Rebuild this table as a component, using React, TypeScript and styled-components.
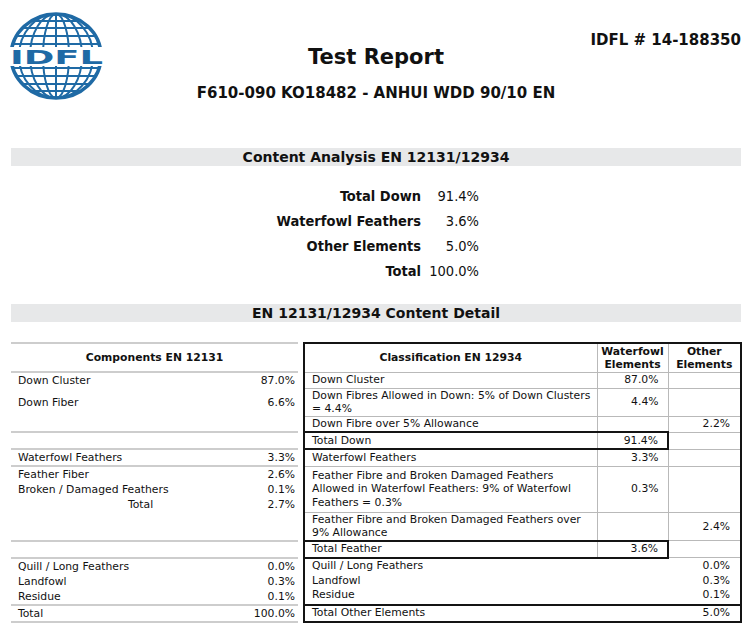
import styled, { createGlobalStyle } from "styled-components";

const GlobalStyle = createGlobalStyle`
  html, body {
    margin: 0;
    padding: 0;
    background: #fff;
  }
  body {
    font-family: "DejaVu Sans", Verdana, sans-serif;
    color: #111;
  }
`;

const BLUE = "#1f6aa5";
const GRID = "#b9b9b9";
const RULE = "#cdcdcd";
const INK = "#141414";

const Page = styled.div`
  width: 750px;
  box-sizing: border-box;
  padding: 0 9px 0 11px;
`;

const Header = styled.header`
  display: grid;
  grid-template-columns: 1fr auto 1fr;
  align-items: start;
`;

const LogoBox = styled.div`
  margin: 10px 0 0 -5px;
  width: 100px;
  height: 92px;
`;

const TitleBlock = styled.div`
  padding-top: 44px;
  text-align: center;
`;

const Title = styled.h1`
  margin: 0;
  font-size: 21px;
  line-height: 26px;
  font-weight: bold;
`;

const Subtitle = styled.h2`
  margin: 13px 0 0;
  font-size: 15px;
  line-height: 20px;
  font-weight: bold;
`;

const ReportNo = styled.div`
  justify-self: end;
  padding-top: 30px;
  font-size: 15px;
  line-height: 20px;
  font-weight: bold;
`;

const SectionBar = styled.div<{ $gap: number }>`
  margin-top: ${({ $gap }) => $gap}px;
  height: 18px;
  line-height: 18px;
  background: #e7e8e9;
  text-align: center;
  font-size: 14px;
  font-weight: bold;
`;

const Summary = styled.div`
  margin-top: 18px;
  display: grid;
  grid-template-columns: 410px 58px;
  font-family: "DejaVu Sans Condensed", "DejaVu Sans", sans-serif;
  font-stretch: condensed;
  font-size: 14.5px;
  line-height: 25px;
`;

const SumLabel = styled.div`
  text-align: right;
  font-weight: bold;
`;

const SumValue = styled.div`
  text-align: right;
`;

const Grid = styled.table`
  margin-top: 20px;
  width: 730px;
  table-layout: fixed;
  border-collapse: collapse;
  font-size: 10.8px;
`;

const Row = styled.tr<{ $h: number }>`
  height: ${({ $h }) => $h}px;
`;

const LCell = styled.td<{ $rule?: boolean; $num?: boolean; $top?: boolean }>`
  padding: 0 3px 0 7px;
  line-height: 15px;
  white-space: nowrap;
  text-align: ${({ $num }) => ($num ? "right" : "left")};
  vertical-align: ${({ $top }) => ($top ? "top" : "middle")};
  border-bottom: ${({ $rule }) => ($rule ? `2px solid ${RULE}` : "none")};
`;

const LHead = styled.th`
  border-top: 2px solid ${RULE};
  border-bottom: 2px solid ${RULE};
  font-weight: bold;
  text-align: center;
  vertical-align: middle;
  padding: 0;
`;

const Gap = styled.td`
  padding: 0;
  border: none;
`;

const RHead = styled.th<{ $edge?: boolean; $first?: boolean }>`
  border: 1px solid ${GRID};
  border-top: 2px solid ${INK};
  ${({ $first }) => ($first ? `border-left: 2px solid ${INK};` : "")}
  ${({ $edge }) => ($edge ? `border-right: 2px solid ${INK};` : "")}
  font-weight: bold;
  text-align: center;
  vertical-align: middle;
  line-height: 13px;
  padding: 0 2px;
  white-space: nowrap;
`;

const RLabel = styled.td<{ $total?: boolean; $open?: boolean; $lh?: number }>`
  border: 1px solid ${GRID};
  border-left: 2px solid ${INK};
  ${({ $total }) => ($total ? `border-top: 2px solid ${INK}; border-bottom: 2px solid ${INK};` : "")}
  ${({ $open }) => ($open ? "border-right: none;" : "")}
  padding: 0 4px 0 7px;
  line-height: ${({ $lh }) => $lh ?? 13.5}px;
  white-space: nowrap;
  text-align: left;
  vertical-align: middle;
`;

const RWater = styled.td<{ $total?: boolean }>`
  border: 1px solid ${GRID};
  ${({ $total }) =>
    $total ? `border-top: 2px solid ${INK}; border-bottom: 2px solid ${INK}; border-right: 2px solid ${INK};` : ""}
  padding: 0 9px 0 2px;
  line-height: 13.5px;
  text-align: right;
  vertical-align: middle;
`;

const ROther = styled.td<{ $total?: boolean; $open?: boolean; $lh?: number }>`
  border: 1px solid ${GRID};
  border-right: 2px solid ${INK};
  ${({ $total }) => ($total ? `border-top: 2px solid ${INK}; border-bottom: 2px solid ${INK};` : "")}
  ${({ $open }) => ($open ? "border-left: none;" : "")}
  padding: 0 10px 0 2px;
  line-height: ${({ $lh }) => $lh ?? 13.5}px;
  text-align: right;
  vertical-align: middle;
`;

const Line = styled.div<{ $indent?: number }>`
  padding-left: ${({ $indent }) => $indent ?? 0}px;
`;

const Logo = () => {
  const cx = 50;
  const cy = 46;
  const rx = 45;
  const ry = 42;
  const lats = [-35, -28, -20, -12, 12, 20, 28, 35];
  const mers = [13, 26, 37];
  return (
    <svg width="100" height="92" viewBox="0 0 100 92">
      <defs>
        <clipPath id="globe">
          <ellipse cx={cx} cy={cy} rx={rx} ry={ry} />
        </clipPath>
      </defs>
      <g clipPath="url(#globe)" stroke={BLUE} strokeWidth="2" fill="none">
        {lats.map((d) => (
          <line key={d} x1={0} x2={100} y1={cy + d} y2={cy + d} />
        ))}
        <line x1={cx} x2={cx} y1={0} y2={92} />
        {mers.map((m) => (
          <ellipse key={m} cx={cx} cy={cy} rx={m} ry={ry} />
        ))}
      </g>
      <ellipse cx={cx} cy={cy} rx={rx} ry={ry} stroke={BLUE} strokeWidth="3.5" fill="none" />
      <rect x={2} y={37} width={96} height={19} fill="#fff" />
      <text
        x={4}
        y={54}
        textLength={93}
        lengthAdjust="spacingAndGlyphs"
        fontFamily="DejaVu Sans, sans-serif"
        fontWeight="bold"
        fontSize="19"
        fill={BLUE}
      >
        IDFL
      </text>
    </svg>
  );
};

const summary = [
  ["Total Down", "91.4%"],
  ["Waterfowl Feathers", "3.6%"],
  ["Other Elements", "5.0%"],
  ["Total", "100.0%"],
];

export default function App() {
  return (
    <Page>
      <GlobalStyle />
      <Header>
        <LogoBox>
          <Logo />
        </LogoBox>
        <TitleBlock>
          <Title>Test Report</Title>
          <Subtitle>F610-090 KO18482 - ANHUI WDD 90/10 EN</Subtitle>
        </TitleBlock>
        <ReportNo>IDFL # 14-188350</ReportNo>
      </Header>

      <SectionBar $gap={45}>Content Analysis EN 12131/12934</SectionBar>

      <Summary>
        {summary.map(([label, value]) => [
          <SumLabel key={label}>{label}</SumLabel>,
          <SumValue key={label + "v"}>{value}</SumValue>,
        ])}
      </Summary>

      <SectionBar $gap={20}>EN 12131/12934 Content Detail</SectionBar>

      <Grid>
        <colgroup>
          <col style={{ width: 225 }} />
          <col style={{ width: 62 }} />
          <col style={{ width: 6 }} />
          <col style={{ width: 293 }} />
          <col style={{ width: 71 }} />
          <col style={{ width: 73 }} />
        </colgroup>
        <tbody>
          <Row $h={29}>
            <LHead colSpan={2}>Components EN 12131</LHead>
            <Gap />
            <RHead $first>Classification EN 12934</RHead>
            <RHead>
              Waterfowl
              <br />
              Elements
            </RHead>
            <RHead $edge>
              Other
              <br />
              Elements
            </RHead>
          </Row>
          <Row $h={16}>
            <LCell>Down Cluster</LCell>
            <LCell $num>87.0%</LCell>
            <Gap />
            <RLabel>Down Cluster</RLabel>
            <RWater>87.0%</RWater>
            <ROther />
          </Row>
          <Row $h={28}>
            <LCell>Down Fiber</LCell>
            <LCell $num>6.6%</LCell>
            <Gap />
            <RLabel>
              Down Fibres Allowed in Down: 5% of Down Clusters
              <br />= 4.4%
            </RLabel>
            <RWater>4.4%</RWater>
            <ROther />
          </Row>
          <Row $h={16}>
            <LCell $rule />
            <LCell $rule />
            <Gap />
            <RLabel>Down Fibre over 5% Allowance</RLabel>
            <RWater />
            <ROther>2.2%</ROther>
          </Row>
          <Row $h={17}>
            <LCell $rule />
            <LCell $rule />
            <Gap />
            <RLabel $total>Total Down</RLabel>
            <RWater $total>91.4%</RWater>
            <ROther />
          </Row>
          <Row $h={16}>
            <LCell $rule>Waterfowl Feathers</LCell>
            <LCell $rule $num>
              3.3%
            </LCell>
            <Gap />
            <RLabel>Waterfowl Feathers</RLabel>
            <RWater>3.3%</RWater>
            <ROther />
          </Row>
          <Row $h={45}>
            <LCell $top>
              <Line>Feather Fiber</Line>
              <Line>Broken / Damaged Feathers</Line>
              <Line $indent={110}>Total</Line>
            </LCell>
            <LCell $top $num>
              <Line>2.6%</Line>
              <Line>0.1%</Line>
              <Line>2.7%</Line>
            </LCell>
            <Gap />
            <RLabel>
              Feather Fibre and Broken Damaged Feathers
              <br />
              Allowed in Waterfowl Feathers: 9% of Waterfowl
              <br />
              Feathers = 0.3%
            </RLabel>
            <RWater>0.3%</RWater>
            <ROther />
          </Row>
          <Row $h={28}>
            <LCell $rule />
            <LCell $rule />
            <Gap />
            <RLabel>
              Feather Fibre and Broken Damaged Feathers over
              <br />
              9% Allowance
            </RLabel>
            <RWater />
            <ROther>2.4%</ROther>
          </Row>
          <Row $h={17}>
            <LCell $rule />
            <LCell $rule />
            <Gap />
            <RLabel $total>Total Feather</RLabel>
            <RWater $total>3.6%</RWater>
            <ROther />
          </Row>
          <Row $h={45}>
            <LCell $rule>
              <Line>Quill / Long Feathers</Line>
              <Line>Landfowl</Line>
              <Line>Residue</Line>
            </LCell>
            <LCell $rule $num>
              <Line>0.0%</Line>
              <Line>0.3%</Line>
              <Line>0.1%</Line>
            </LCell>
            <Gap />
            <RLabel colSpan={2} $open $lh={14.5}>
              Quill / Long Feathers
              <br />
              Landfowl
              <br />
              Residue
            </RLabel>
            <ROther $open $lh={14.5}>
              0.0%
              <br />
              0.3%
              <br />
              0.1%
            </ROther>
          </Row>
          <Row $h={16}>
            <LCell $rule>Total</LCell>
            <LCell $rule $num>
              100.0%
            </LCell>
            <Gap />
            <RLabel colSpan={2} $total $open>
              Total Other Elements
            </RLabel>
            <ROther $total $open>
              5.0%
            </ROther>
          </Row>
        </tbody>
      </Grid>
    </Page>
  );
}
